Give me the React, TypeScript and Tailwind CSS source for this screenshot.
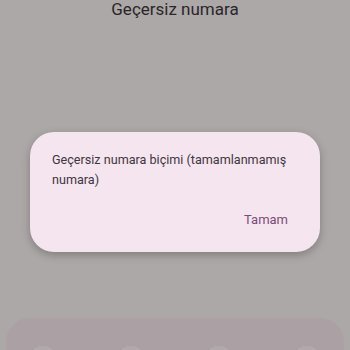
export default function App() {
  return (
    <div
      className="relative w-[350px] h-[350px] overflow-hidden bg-[#aca8a8] flex flex-col"
      style={{ fontFamily: 'Roboto, "Noto Sans", sans-serif' }}
    >
      {/* Header title, partly off-screen */}
      <div className="h-[18px] flex items-center justify-center text-[17px] text-[#2a2628] leading-none">
        Geçersiz numara
      </div>

      {/* Dialog */}
      <div className="mt-[114px] mx-[30px] h-[120px] rounded-[24px] bg-[#f5e5ef] shadow-[0_3px_8px_rgba(0,0,0,0.25)] pl-[22px] pr-[20px] pt-[18px] flex flex-col">
        <p className="text-[12.6px] leading-[20px] text-[#3e3540]">
          Geçersiz numara biçimi (tamamlanmamış numara)
        </p>
        <div className="mt-auto mb-[22px] flex justify-end pr-[12px]">
          <span className="text-[13px] leading-[20px] text-[#7b4c79]">Tamam</span>
        </div>
      </div>

      {/* Bottom panel */}
      <div className="mt-[66px] mx-[6px] flex-1 rounded-t-[24px] bg-[#aba1a5] flex justify-between items-end px-[22px]">
        <div className="w-[30px] h-[30px] -mb-[26px] rounded-full bg-[#b2a9ad]" />
        <div className="w-[30px] h-[30px] -mb-[26px] rounded-full bg-[#b2a9ad]" />
        <div className="w-[30px] h-[30px] -mb-[26px] rounded-full bg-[#b2a9ad]" />
        <div className="w-[30px] h-[30px] -mb-[26px] rounded-full bg-[#b2a9ad]" />
      </div>
    </div>
  );
}
